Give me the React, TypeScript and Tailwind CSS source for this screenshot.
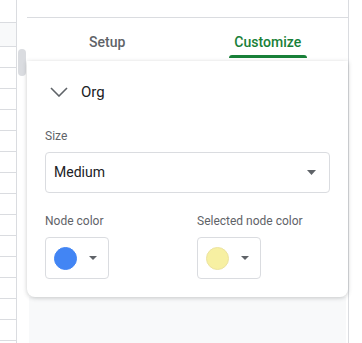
import React from "react";

function Caret({ w = 10, h = 5, className = "" }: { w?: number; h?: number; className?: string }) {
  return (
    <svg width={w} height={h} viewBox={`0 0 ${w} ${h}`} className={className}>
      <path d={`M0 0 L${w} 0 L${w / 2} ${h} Z`} fill="#5f6368" />
    </svg>
  );
}

function ColorButton({ color, border }: { color: string; border: string }) {
  return (
    <div className="flex h-[42px] w-[64px] items-center rounded border border-[#dadce0] bg-white pl-[8px]">
      <div
        className="h-[23px] w-[23px] rounded-full"
        style={{ backgroundColor: color, border: `1px solid ${border}` }}
      />
      <Caret w={8} h={4} className="ml-[12px]" />
    </div>
  );
}

export default function App() {
  const rows = Array.from({ length: 14 });
  return (
    <div
      className="flex h-[343px] w-[362px] overflow-hidden bg-white"
      style={{ fontFamily: "Roboto, 'Noto Sans', Arial, sans-serif" }}
    >
      {/* spreadsheet grid */}
      <div className="flex w-[17px] shrink-0 flex-col border-r border-[#dadce0]">
        <div className="h-[23px] shrink-0 border-b border-[#dadce0] bg-white" />
        <div className="h-[24px] shrink-0 border-b border-[#dadce0] bg-[#f8f9fa]" />
        {rows.map((_, i) => (
          <div key={i} className="h-[21px] shrink-0 border-b border-[#dadce0]" />
        ))}
      </div>
      {/* scrollbar */}
      <div className="flex w-[10px] shrink-0 flex-col items-center pt-[49px]">
        <div className="h-[27px] w-[8px] rounded-full bg-[#dadce0]" />
      </div>
      {/* side panel */}
      <div className="flex w-[322px] shrink-0 flex-col border-r border-[#dadce0] bg-white">
        <div className="h-[18px] shrink-0 border-b border-[#dadce0]" />
        <div className="flex h-[43px] shrink-0">
          <div className="flex flex-1 flex-col items-center">
            <div className="pt-[15px] text-[14px] font-medium leading-[18px] text-[#5f6368]">
              Setup
            </div>
          </div>
          <div className="flex flex-1 flex-col items-center">
            <div className="pt-[15px] text-[14px] font-medium leading-[18px] text-[#188038]">
              Customize
            </div>
            <div className="mt-[4px] h-[3px] w-[78px] rounded-t-[3px] bg-[#188038]" />
          </div>
        </div>
        <div className="flex flex-1 flex-col bg-white">
          <div className="relative z-10 rounded-b-lg bg-white px-[18px] pb-[18px] shadow-[0_1px_4px_rgba(60,64,67,0.28)]">
            <div className="flex h-[60px] items-center pt-[1px]">
              <svg width="18" height="10" viewBox="0 0 18 10" className="ml-[5px]">
                <path
                  d="M1 1 L9 9 L17 1"
                  fill="none"
                  stroke="#5f6368"
                  strokeWidth="1.6"
                />
              </svg>
              <span className="ml-[13px] text-[15px] leading-[20px] text-[#202124]">
                Org
              </span>
            </div>
            <div className="pt-[7px] text-[12px] leading-[16px] text-[#5f6368]">Size</div>
            <div className="mt-[8px] flex h-[41px] items-center justify-between rounded border border-[#dadce0] pl-[8px] pr-[13px]">
              <span className="text-[14px] text-[#202124]">Medium</span>
              <Caret w={9} h={5} />
            </div>
            <div className="mt-[20px] flex">
              <div className="w-[152px]">
                <div className="text-[12px] leading-[16px] text-[#5f6368]">Node color</div>
                <div className="mt-[8px]">
                  <ColorButton color="#4285f4" border="#4285f4" />
                </div>
              </div>
              <div>
                <div className="text-[12px] leading-[16px] text-[#5f6368]">
                  Selected node color
                </div>
                <div className="mt-[8px]">
                  <ColorButton color="#f7f0a2" border="#ece3a0" />
                </div>
              </div>
            </div>
          </div>
          <div className="mx-[2px] flex-1 bg-[#f8f9fa]" />
        </div>
      </div>
    </div>
  );
}
